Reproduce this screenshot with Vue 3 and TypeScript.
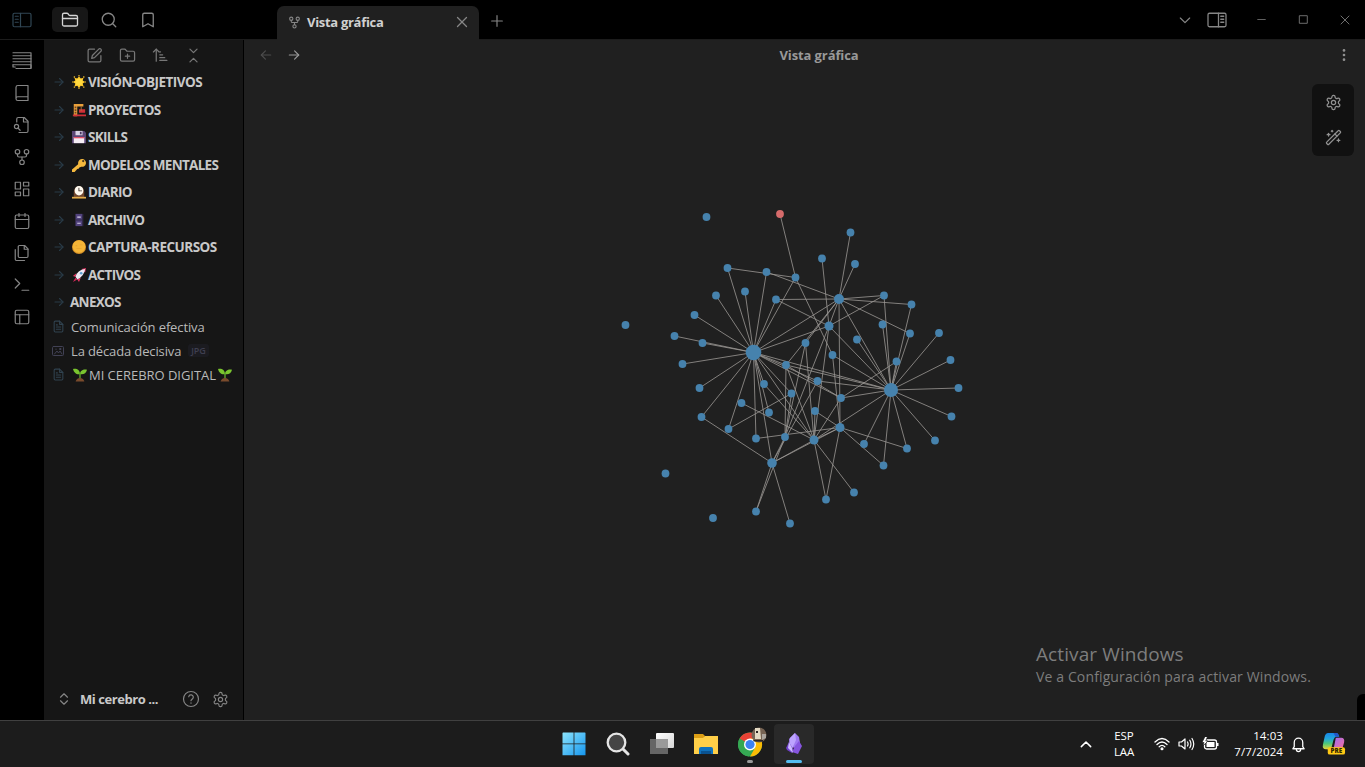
<script setup lang="ts">
import { h, type FunctionalComponent } from 'vue'

const icons: Record<string, string[]> = {
  folder: ['M20 20a2 2 0 0 0 2-2V8a2 2 0 0 0-2-2h-7.900a2 2 0 0 1-1.700-.9L9.600 4a2 2 0 0 0-1.700-1H4a2 2 0 0 0-2 2v13a2 2 0 0 0 2 2Z', 'M2 10h20'],
  search: ['M19 11a8 8 0 1 1-16 0a8 8 0 0 1 16 0Z', 'm21 21-4.300-4.300'],
  bookmark: ['m19 21-7-4-7 4V5a2 2 0 0 1 2-2h10a2 2 0 0 1 2 2v16z'],
  edit: ['M12 3H5a2 2 0 0 0-2 2v14a2 2 0 0 0 2 2h14a2 2 0 0 0 2-2v-7', 'M18.400 2.600a2.200 2.200 0 0 1 3 3L12 15l-4 1 1-4Z'],
  folderPlus: ['M20 20a2 2 0 0 0 2-2V8a2 2 0 0 0-2-2h-7.900a2 2 0 0 1-1.700-.9L9.600 4a2 2 0 0 0-1.700-1H4a2 2 0 0 0-2 2v13a2 2 0 0 0 2 2Z', 'M12 10v6', 'M9 13h6'],
  sort: ['m2 7 4-4 4 4', 'M6 3v17', 'M11 11h4', 'M11 15h7', 'M11 19h10', 'M11 7h1'],
  collapse: ['m7 21 5-5 5 5', 'm7 3 5 5 5-5'],
  book: ['M4 19.500V4.500A2.500 2.500 0 0 1 6.500 2H20v20H6.500a2.500 2.500 0 0 1 0-5H20'],
  fileSearch: ['M5 8V4a2 2 0 0 1 2-2h8l5 5v13a2 2 0 0 1-2 2H8', 'M14 2v6h6', 'M7.500 14a2.800 2.800 0 1 1-5.600 0a2.800 2.800 0 0 1 5.600 0Z', 'm9.500 19-3-3'],
  graph: ['M9 5a3 3 0 1 1-6 0a3 3 0 0 1 6 0Z', 'M21 5a3 3 0 1 1-6 0a3 3 0 0 1 6 0Z', 'M15 19a3 3 0 1 1-6 0a3 3 0 0 1 6 0Z', 'M6 8v2q0 2 2 2h8q2 0 2-2V8', 'M12 12v4'],
  dashboard: ['M3 3h7v9H3z', 'M14 3h7v5h-7z', 'M14 12h7v9h-7z', 'M3 16h7v5H3z'],
  calendar: ['M5 4h14a2 2 0 0 1 2 2v14a2 2 0 0 1-2 2H5a2 2 0 0 1-2-2V6a2 2 0 0 1 2-2Z', 'M8 2v4', 'M16 2v4', 'M3 10h18'],
  files: ['M15.500 2H8.600A1.600 1.600 0 0 0 7 3.600v12.800A1.600 1.600 0 0 0 8.600 18h9.800a1.600 1.600 0 0 0 1.600-1.600V6.500Z', 'M15 2v5h5', 'M3 7.600v12.800A1.600 1.600 0 0 0 4.600 22h10.800'],
  terminal: ['m3 16 6-6-6-6', 'M12 19h9'],
  layout: ['M5 3h14a2 2 0 0 1 2 2v14a2 2 0 0 1-2 2H5a2 2 0 0 1-2-2V5a2 2 0 0 1 2-2Z', 'M3 9h18', 'M9 21V9'],
  x: ['M18 6 6 18', 'm6 6 12 12'],
  plus: ['M12 4v16', 'M4 12h16'],
  left: ['M20 12H4', 'm11 5-7 7 7 7'],
  right: ['M4 12h16', 'm13 5 7 7-7 7'],
  down: ['m5 9 7 7 7-7'],
  up: ['m5 16 7-7 7 7'],
  minus: ['M5 12h14'],
  square: ['M5 5h14v14H5Z'],
  updown: ['m6 15 6 6 6-6', 'm6 9 6-6 6 6'],
  help: ['M22 12a10 10 0 1 1-20 0a10 10 0 0 1 20 0Z', 'M9 9a3 3 0 0 1 6 1c0 2-3 2.500-3 4.200', 'M12 17v.5'],
  dots: ['M12 4v.1', 'M12 12v.1', 'M12 20v.1'],
  gear: ['M12.220 2h-.44a2 2 0 0 0-2 2v.18a2 2 0 0 1-1 1.730l-.43.25a2 2 0 0 1-2 0l-.15-.08a2 2 0 0 0-2.730.73l-.22.38a2 2 0 0 0 .73 2.730l.15.1a2 2 0 0 1 1 1.720v.51a2 2 0 0 1-1 1.740l-.15.090a2 2 0 0 0-.73 2.730l.22.38a2 2 0 0 0 2.730.73l.15-.08a2 2 0 0 1 2 0l.43.25a2 2 0 0 1 1 1.730V20a2 2 0 0 0 2 2h.44a2 2 0 0 0 2-2v-.18a2 2 0 0 1 1-1.730l.43-.25a2 2 0 0 1 2 0l.15.080a2 2 0 0 0 2.730-.73l.22-.39a2 2 0 0 0-.73-2.730l-.15-.08a2 2 0 0 1-1-1.740v-.5a2 2 0 0 1 1-1.740l.15-.09a2 2 0 0 0 .73-2.730l-.22-.38a2 2 0 0 0-2.730-.73l-.15.080a2 2 0 0 1-2 0l-.43-.25a2 2 0 0 1-1-1.730V4a2 2 0 0 0-2-2z', 'M15 12a3 3 0 1 1-6 0a3 3 0 0 1 6 0Z'],
  wand: ['m21.600 3.600-1.200-1.200a1.200 1.200 0 0 0-1.800 0L2.400 18.600a1.200 1.200 0 0 0 0 1.800l1.200 1.200a1.200 1.200 0 0 0 1.800 0L21.600 5.400a1.200 1.200 0 0 0 0-1.800', 'm14 7 3 3', 'M5 6v4', 'M19 14v4', 'M10 2v2', 'M7 8H3', 'M21 16h-4', 'M11 3H9'],
  file: ['M14 2H6a2 2 0 0 0-2 2v16a2 2 0 0 0 2 2h12a2 2 0 0 0 2-2V8Z', 'M14 2v6h6', 'M8 9h2', 'M8 13h8', 'M8 17h8'],
  image: ['M3 3h18a2 2 0 0 1 2 2v14a2 2 0 0 1-2 2H3a2 2 0 0 1-2-2V5a2 2 0 0 1 2-2Z', 'm5 18 5-6 3 4 3-4 4 6', 'M8 8v1', 'M16 7h2v2h-2Z'],
  sideLeft: ['M2 3h20a2 2 0 0 1 2 2v14a2 2 0 0 1-2 2H2a2 2 0 0 1-2-2V5a2 2 0 0 1 2-2Z', 'M10 3v18', 'M3 7h4', 'M3 11h4', 'M3 15h4'],
  sideRight: ['M2 3h20a2 2 0 0 1 2 2v14a2 2 0 0 1-2 2H2a2 2 0 0 1-2-2V5a2 2 0 0 1 2-2Z', 'M14 3v18', 'M17 7h4', 'M17 11h4', 'M17 15h4'],
  lines: ['M0 1h24v20', 'M0 5h24', 'M0 9h24', 'M0 13h24', 'M0 17h24v5H4', 'M0 17v3h3'],
  bell: ['M4 18h16l-2-3V9a6 6 0 0 0-12 0v6Z', 'M9 19a3 3 0 0 0 6 0'],
}

const Icon: FunctionalComponent<{ name: string; size?: number; w?: number }> = (p) =>
  h('svg', {
    width: p.size ?? 18, height: p.size ?? 18, viewBox: '0 0 24 24', fill: 'none', stroke: 'currentColor',
    'stroke-width': p.w ?? 1.75, 'stroke-linecap': 'round', 'stroke-linejoin': 'round', overflow: 'visible',
  }, icons[p.name].map((d) => h('path', { d })))
Icon.props = ['name', 'size', 'w']

type Shape = [fill: string, d: string]
const emblems: Record<string, Shape[]> = {
  sun: [['#ffc928', 'M8 1.500 9.900 4 13.200 3 12.200 6.200 15 8 12.200 9.800 13.200 13 9.900 12.200 8 15 6.100 12.200 2.800 13 3.800 9.800 1 8 3.800 6.200 2.800 3 6.100 4Z'], ['#ffd940', 'M4 8a4 4 0 1 0 8 0a4 4 0 1 0-8 0'], ['#e8b52d', 'M7.300 0h1.400v1.500H7.300ZM7.300 14.500h1.400V16H7.300ZM0 7.300h1.500v1.400H0ZM14.500 7.300H16v1.400h-1.500ZM2 1.500h1.500V3H2ZM12.700 1.500h1.500V3h-1.500ZM2 13h1.500v1.500H2ZM12.700 13h1.500v1.500h-1.500Z']],
  crane: [['#e9a03b', 'M2 1h11v3H6v11H2Z'], ['#704426', 'M3 4h2v2H3ZM3 7h2v2H3ZM3 10h2v2H3Z'], ['#cf2f38', 'M8 7h7v4H8ZM1 13h15v2H1Z'], ['#b6763a', 'M10 4h1v5h-1Z']],
  disk: [['#5b4675', 'M0 1h14l2 2v12H0Z'], ['#d9d3e5', 'M4 1h8v5H4Z'], ['#46355e', 'M9 2h2v3H9Z'], ['#f5edf4', 'M2 8h12v7H2Z'], ['#e35268', 'M2 8h12v1.500H2Z']],
  key: [['#f4b83e', 'M7 5a4.500 4.500 0 1 1 3.500 5L8 11v1l-2 .5L3 16H0v-3L7 7Z'], ['#46351d', 'M11.500 3.500a1.300 1.300 0 1 0 2.600 0a1.300 1.300 0 1 0-2.600 0']],
  clock: [['#70472f', 'M2 14V8a6 7 0 0 1 12 0v6Z'], ['#fffaf0', 'M3 6.500a5 5.500 0 1 0 10 0a5 5.500 0 1 0-10 0'], ['#3e302c', 'M7.400 3h1v3.200h3v1h-4Z'], ['#e3ac4a', 'M0 13.500h16v2H0Z']],
  cabinet: [['#51427c', 'M4 1h8v14H4Z'], ['#302849', 'M4 7.500h8v1H4ZM12 1h1v14h-1Z'], ['#d6cde8', 'M6 4h4v1.300H6ZM6 11h4v1.300H6Z']],
  coin: [['#d69027', 'M0 8a8 8 0 1 0 16 0a8 8 0 1 0-16 0'], ['#f4b537', 'M.8 7.500a7.200 7.200 0 1 0 14.400 0a7.200 7.200 0 1 0-14.400 0'], ['#e6a431', 'M4 6h2v1H4ZM9 5h3v1H9ZM5 9h6v1H5Z']],
  rocket: [['#e83563', 'M5 6 1 9l3 1ZM10 11 8 16l-2-3ZM11 1l5-1-1 5Z'], ['#eee9f3', 'M4 10Q6 2 15 1Q14 9 6 13Z'], ['#5ca0d3', 'M9 6a1.500 1.500 0 1 0 3 0a1.500 1.500 0 1 0-3 0'], ['#d6285a', 'M4 11l2 2-5 3Z']],
  sprout: [['#7ac52f', 'M8 7C4 8 1 5 0 1C4 0 8 2 8 7ZM8 7C8 3 12 1 16 2C15 6 12 8 8 7Z'], ['#5fa12b', 'M7.200 5h1.600v8H7.200Z'], ['#7a4b2c', 'M3 15.500q1-4 5-4t5 4Z']],
}
const Emblem: FunctionalComponent<{ name: string; size?: number }> = (p) =>
  h('svg', { width: p.size ?? 14, height: p.size ?? 14, viewBox: '0 0 16 16' }, emblems[p.name].map(([fill, d]) => h('path', { fill, d })))
Emblem.props = ['name', 'size']

const ribbon = ['lines', 'book', 'fileSearch', 'graph', 'dashboard', 'calendar', 'files', 'terminal', 'layout']
const folders = [
  { icon: 'sun', name: 'VISIÓN-OBJETIVOS', wide: true },
  { icon: 'crane', name: 'PROYECTOS' },
  { icon: 'disk', name: 'SKILLS' },
  { icon: 'key', name: 'MODELOS MENTALES' },
  { icon: 'clock', name: 'DIARIO' },
  { icon: 'cabinet', name: 'ARCHIVO' },
  { icon: 'coin', name: 'CAPTURA-RECURSOS', wide: true },
  { icon: 'rocket', name: 'ACTIVOS' },
  { icon: '', name: 'ANEXOS' },
]

const nodes: Record<string, [number, number, number?]> = {
  a: [706.5, 217], b: [780, 214], c: [850.5, 232.5], d: [822, 258.5], e: [855, 264], f: [727.5, 268], g: [766.5, 272],
  h: [795.5, 277.5], i: [716, 295.5], j: [745, 291.5], k: [776, 299.5], l: [839, 299, 5], m: [884, 295.5], n: [911.5, 304.5],
  o: [694.5, 315], p: [625.5, 325], q: [829, 326, 4.500], r: [882.5, 324.5], s: [910, 333.5], t: [939, 333], u: [674.5, 336],
  v: [702.5, 343], w: [857, 339.5], x: [805.5, 343], H: [753.5, 352.5, 7.800], y: [832.5, 355], z: [682.5, 364], A: [786, 365],
  B: [896.5, 361.5], C: [950.5, 360], D: [699.5, 388], E: [764, 384], F: [817.5, 381], G: [791.5, 393.5], R: [891, 390, 7],
  I: [958.5, 388], J: [741.5, 403], K: [769, 412.5], L: [815, 411], M: [841, 398], N: [951.5, 416.5], O: [701.5, 417],
  P: [728.5, 429], Q: [756, 438.5], S: [785, 437], T: [814, 440, 4.500], U: [840, 427.5, 4.500], V: [864, 444], W: [907, 448.5],
  X: [935, 440.5], Y: [883.5, 465.5], Z: [772, 463, 4.800], '1': [826, 499.5], '2': [854, 492.5], '3': [756, 511.5],
  '4': [790, 523.5], '5': [665.5, 473.5], '6': [713, 518],
}
const links: Record<string, string> = {
  H: 'fgijkhouvzDOPQElqAGFMZTRK',
  R: 'lmnrstCBINXVYwyqAFMT',
  l: 'gkcemnsUqxA',
  q: 'dmkTS',
  h: 'bfy',
  T: 'JAExZMUL12',
  U: 'yLYWQZ1',
  Z: 'OFS34',
  M: 'BA',
  S: 'AxG3',
  P: 'G',
  W: 'R',
}
const edges = Object.entries(links).flatMap(([from, to]) => [...to].map((t) => ({ key: from + t, s: nodes[from], e: nodes[t] })))
</script>

<template>
  <div class="screen">
    <header class="titlebar">
      <div class="top-left">
        <span class="cell toggle"><Icon name="sideLeft" :size="18" :w="1.6" /></span>
        <span class="cell active"><Icon name="folder" /></span>
        <span class="cell"><Icon name="search" /></span>
        <span class="cell"><Icon name="bookmark" /></span>
      </div>
      <div class="tab">
        <Icon name="graph" :size="13" :w="2" />
        <b>Vista gráfica</b>
        <Icon name="x" :size="18" />
      </div>
      <div class="newtab"><Icon name="plus" :size="16" /></div>
      <div class="window-tools">
        <span class="cell sm"><Icon name="down" :size="16" /></span>
        <span class="cell mid"><Icon name="sideRight" :size="18" :w="1.7" /></span>
        <span class="cell win"><Icon name="minus" :size="13" :w="1.5" /></span>
        <span class="cell win"><Icon name="square" :size="13" :w="1.7" /></span>
        <span class="cell win"><Icon name="x" :size="16" :w="1.4" /></span>
      </div>
    </header>

    <div class="workspace">
      <nav class="ribbon">
        <span v-for="r in ribbon" :key="r"><Icon :name="r" :size="18" :w="1.6" /></span>
      </nav>
      <aside class="sidebar">
        <div class="tools">
          <Icon name="edit" :size="17" /><Icon name="folderPlus" :size="17" /><Icon name="sort" :size="17" /><Icon name="collapse" :size="17" />
        </div>
        <ul class="tree">
          <li v-for="f in folders" :key="f.name" class="folder">
            <Icon class="arrow" name="right" :size="12" :w="2.2" />
            <Emblem v-if="f.icon" :name="f.icon" />
            <span :class="['name', { plain: !f.icon, wide: f.wide }]">{{ f.name }}</span>
          </li>
          <li class="doc"><Icon name="file" :size="13" :w="2" /><span>Comunicación efectiva</span></li>
          <li class="doc img"><Icon name="image" :size="12" :w="2" /><span>La década decisiva</span><em>JPG</em></li>
          <li class="doc digital"><Icon name="file" :size="13" :w="2" /><Emblem name="sprout" /><span>MI CEREBRO DIGITAL</span><Emblem name="sprout" /></li>
        </ul>
        <div class="vault">
          <Icon name="updown" :size="14" :w="2" />
          <b>Mi cerebro ...</b>
          <Icon name="help" :size="18" :w="1.6" />
          <Icon name="gear" :size="17" :w="1.6" />
        </div>
      </aside>
      <main class="view">
        <div class="view-head">
          <div class="nav"><Icon class="dim" name="left" :size="14" :w="2" /><Icon name="right" :size="14" :w="2" /></div>
          <b>Vista gráfica</b>
          <Icon class="more" name="dots" :size="14" :w="4.5" />
        </div>
        <svg class="graph" viewBox="244 72 1121 648" width="1121" height="648">
          <line v-for="l in edges" :key="l.key" :x1="l.s[0]" :y1="l.s[1]" :x2="l.e[0]" :y2="l.e[1]" />
          <circle v-for="(n, id) in nodes" :key="id" :class="{ missing: id === 'b' }" :cx="n[0]" :cy="n[1]" :r="n[2] ?? 3.9" />
        </svg>
        <div class="controls"><Icon name="gear" :size="17" /><Icon name="wand" :size="17" /></div>
        <div class="watermark"><p>Activar Windows</p><small>Ve a Configuración para activar Windows.</small></div>
        <i class="corner"></i>
      </main>
    </div>

    <footer class="taskbar">
      <div class="apps">
        <span class="app">
          <svg width="24" height="24" viewBox="0 0 24 24"><defs><linearGradient id="win" x2="1" y2="1"><stop stop-color="#8ce4fc" /><stop offset="1" stop-color="#1596ef" /></linearGradient></defs><path fill="url(#win)" d="M1 .5h10.600v11H.5V1ZM12.400.5H23l.5.5v10.500H12.400ZM.5 12.300h11.100v11H.5ZM12.400 12.300h11.100v11H12.400Z" /></svg>
        </span>
        <span class="app">
          <svg width="24" height="24" viewBox="0 0 24 24" fill="#454545" stroke="#e5e5e5" stroke-width="2.300"><path d="m17 17 5 5" stroke-width="3" stroke-linecap="round" /><circle cx="10.500" cy="10.500" r="8.800" /></svg>
        </span>
        <span class="app">
          <svg width="26" height="24" viewBox="0 0 26 24"><defs><linearGradient id="pane" x2="1" y2="1"><stop stop-color="#fff" /><stop offset="1" stop-color="#d6d6d6" /></linearGradient></defs><rect x="7" y="1" width="18" height="15" rx="1" fill="url(#pane)" /><path fill="#666" d="M1 7h18v15H1Z" /><path fill="#9a9a9a" d="M7 7h12v9H7Z" /></svg>
        </span>
        <span class="app">
          <svg width="26" height="24" viewBox="0 0 26 24"><path fill="#dc9e15" d="M1 2h9l2 2-2 4H1Z" /><path fill="#ffcf48" d="M1 6h9l2-2h13v18H1Z" /><path fill="#0f72bd" d="M6 22v-5q0-2 2-2h10q2 0 2 2v5Z" /><path fill="#0a5290" d="M8 19h10v3H8Z" /></svg>
        </span>
        <span class="app chrome">
          <svg width="32" height="34" viewBox="0 0 32 34">
            <circle cx="14" cy="17.500" r="12" fill="#35a853" /><path fill="#e94235" d="M14 17.500 3.600 11.500A12 12 0 0 1 24.400 11.500Z" /><path fill="#fbbc05" d="M14 11.500h10.400A12 12 0 0 1 14 29.500l5.200-9Z" /><path fill="#35a853" d="M3.600 11.500 8.800 20.500 14 23.500l-1 6A12 12 0 0 1 3.600 11.500" />
            <circle cx="14" cy="17.500" r="6" fill="#fff" /><circle cx="14" cy="17.500" r="4.600" fill="#3c82f3" />
            <circle cx="23" cy="8" r="7.500" fill="#766353" /><path fill="#e3d9c2" d="M19 1h5l1 11h-6Z" /><path fill="#2a2522" d="M20 4h2v2h-2ZM17 13h10v1.500H18Z" /><path fill="#aaa49d" d="M26 7h4v4l-4 2Z" />
          </svg><i class="dot"></i>
        </span>
        <span class="app current">
          <svg width="18" height="24" viewBox="0 0 18 24"><path fill="#9f7af1" d="m10 1 4 4 1 6-4 5-6-1-1-8Z" /><path fill="#bda4ff" d="m10 1 1 7-4 9-3-3 1-8Z" /><path fill="#7141ce" d="m4 10 4 7-1 4-5-3-1-2Z" /><path fill="#8655df" d="m14 9 3 5-4 8-6-2 3-6Z" /><path fill="#cdbaff" d="m4 10 3 6 1 5-5-5Z" /></svg><i class="dash"></i>
        </span>
      </div>
      <div class="tray">
        <Icon class="chev" name="up" :size="16" :w="2.3" />
        <div class="lang"><span>ESP</span><span>LAA</span></div>
        <svg class="wifi" width="16" height="14" viewBox="0 0 16 14" fill="none" stroke="#fff" stroke-width="1.300" stroke-linecap="round"><path d="M1 5q7-7 14 0M3 7.500q5-5 10 0M5.200 9.800q2.800-2.800 5.600 0" /><circle cx="8" cy="11.800" r=".9" fill="#fff" /></svg>
        <svg class="vol" width="17" height="14" viewBox="0 0 17 14" fill="none" stroke="#fff" stroke-width="1.200" stroke-linecap="round" stroke-linejoin="round"><path d="M1 5h2.500L7 2v10L3.500 9H1ZM9.500 5q1.200 2 0 4M11.800 3.200q2.300 3.800 0 7.600M14 1.500q3.500 5.500 0 11" /></svg>
        <svg class="bat" width="17" height="14" viewBox="0 0 17 14"><rect x="2.500" y="3" width="12" height="9" rx="2" fill="none" stroke="#fff" stroke-width="1.300" /><path fill="#fff" d="M4.500 5h8v5h-8ZM15 6h1.500v3H15Z" /><path fill="#fff" stroke="#1c1c1c" stroke-width=".7" d="M3-.5 0 5.500h2L1 9l5-5H3.800L5.500-.5Z" /></svg>
        <div class="clock"><span>14:03</span><span>7/7/2024</span></div>
        <Icon class="bell" name="bell" :size="17" :w="1.8" />
        <svg class="copilot" width="24" height="24" viewBox="0 0 25 25"><defs><linearGradient id="ca" x2="0" y2="1"><stop stop-color="#1787e8" /><stop offset=".35" stop-color="#22a5dc" /><stop offset=".65" stop-color="#4ec879" /><stop offset="1" stop-color="#e7d336" /></linearGradient><linearGradient id="cb" x2="1" y2="1"><stop stop-color="#9e6cf0" /><stop offset="1" stop-color="#f76e9a" /></linearGradient></defs><path fill="url(#ca)" d="M6 1h9q2 0 3 4h-3q-2 0-3 3l-2 8q-1 2-3 2H4q-4 0-3-5L3 4q1-3 3-3" /><path fill="#2356c8" d="M12 1h3q2 0 3 4h-4Z" /><path fill="url(#cb)" d="M15 6h5q4 0 3 5l-2 7h-9l2-10q0-2 1-2" /><rect x="6" y="16" width="18" height="7.500" rx="2" fill="#ffc914" /><text x="15" y="22.300" text-anchor="middle">PRE</text></svg>
      </div>
    </footer>
  </div>
</template>

<style>
html, body { margin: 0; background: #000; overflow: hidden; }
</style>
<style scoped>
* { box-sizing: border-box; }
svg { flex: none; display: block; }
.screen { width: 1365px; height: 767px; display: flex; flex-direction: column; overflow: hidden; background: #000; color: #b8b8b8; font: 13px "Open Sans", "Noto Sans", sans-serif; white-space: nowrap; }
.titlebar { height: 40px; flex: none; display: flex; border-bottom: 1px solid #1c1c1c; color: #868686; }
.top-left { width: 277px; display: flex; align-items: center; }
.cell { display: flex; align-items: center; justify-content: center; width: 39px; height: 25px; border-radius: 5px; }
.toggle { width: 44px; margin-right: 8px; color: #304654; }
.active { width: 36px; margin-right: 1px; background: #171717; color: #d4d4d4; }
.tab { width: 202px; height: 34px; margin-top: 6px; padding: 0 8px 2px 11px; display: flex; align-items: center; background: #202020; border-radius: 7px 7px 0 0; }
.tab b { flex: 1; margin-left: 6px; color: #d0d0d0; letter-spacing: -.3px; }
.newtab { padding: 13px 10px; }
.window-tools { margin-left: auto; display: flex; align-items: center; }
.sm { width: 32px; }
.mid { width: 32px; margin-right: 7px; }
.win { width: 42px; color: #777; }
.win:last-child { width: 41px; }
.workspace { height: 680px; flex: none; display: flex; }
.ribbon { width: 44px; padding-top: 5px; color: #858585; }
.ribbon span { height: 32px; display: flex; align-items: center; justify-content: center; }
.sidebar { width: 200px; display: flex; flex-direction: column; background: #161616; border-right: 1px solid #000; }
.tools { height: 28.5px; padding: 7px 0 0 42px; display: flex; gap: 16px; color: #777; }
.tree { list-style: none; margin: 0; padding: 0; flex: 1; }
.folder { height: 27.5px; display: flex; align-items: center; padding-left: 9px; color: #c8c8c8; font-size: 13.5px; font-weight: 700; }
.folder:nth-child(9) { height: 26px; }
.arrow { margin-right: 7px; color: #293b47; }
.name { margin-left: 2px; letter-spacing: -.7px; }
.wide { letter-spacing: -.5px; }
.plain { margin-left: -2px; }
.doc { height: 24px; display: flex; align-items: center; padding-left: 8px; color: #b9b9b9; letter-spacing: -.13px; }
.doc > svg:first-child { color: #30424f; margin-right: 6px; }
.img > svg:first-child { color: #414154; margin-right: 7px; }
.digital > svg:first-child { margin-right: 8px; }
.digital span { margin: 0 2px; letter-spacing: -.03px; }
.doc em { margin-left: 7px; padding: 0 3px; border-radius: 3px; background: #1b1b20; color: #3f3f50; font: 600 9px/13px "Open Sans", sans-serif; }
.vault { height: 42px; display: flex; align-items: center; padding-left: 13px; color: #858585; }
.vault b { width: 94px; margin-left: 9px; margin-right: 8px; color: #c9c9c9; letter-spacing: -.45px; }
.vault svg:last-child { margin-left: 12px; }
.view { width: 1121px; position: relative; background: #202020; }
.view-head { height: 32px; padding: 0 14px 2px 15px; display: flex; align-items: center; color: #999; }
.view-head b { flex: 1; text-align: center; letter-spacing: -.1px; }
.nav { display: flex; gap: 14px; }
.dim { color: #4c4c4c; }
.more { color: #909090; }
.graph line { stroke: #9b9794; stroke-width: .9; opacity: .9; }
.graph circle { fill: #4682ad; }
.graph circle.missing { fill: #d66b6b; }
.controls { position: absolute; right: 11px; top: 44px; width: 42px; height: 72px; display: flex; flex-direction: column; align-items: center; justify-content: space-between; padding: 10px 0; border-radius: 6px; background: #111; color: #929292; }
.watermark { position: absolute; left: 792px; top: 601px; color: #7d7d7d; }
.watermark p { margin: 0; font-size: 19px; line-height: 26px; letter-spacing: .1px; }
.watermark small { display: block; font-size: 14px; line-height: 19px; letter-spacing: .13px; }
.corner { position: absolute; right: 0; bottom: 0; width: 8px; height: 26px; background: #000; border-radius: 6px 0 0 0; }
.taskbar { height: 47px; flex: none; display: flex; justify-content: space-between; background: #1c1c1c; border-top: 1px solid #404040; color: #fff; }
.apps { display: flex; padding-left: 554px; gap: 4px; }
.app { position: relative; width: 40px; height: 40px; margin-top: 3px; display: flex; align-items: center; justify-content: center; border-radius: 4px; }
.chrome svg { margin-left: 4px; }
.current { background: #292929; }
.dot, .dash { position: absolute; bottom: 1px; width: 6px; height: 3px; border-radius: 2px; background: #999; }
.dash { width: 16px; background: #55bdf1; }
.tray { display: flex; align-items: center; width: 287px; font-size: 11.5px; }
.lang, .clock { display: flex; flex-direction: column; line-height: 16px; }
.lang { width: 24px; margin-left: 18px; align-items: center; letter-spacing: -.1px; }
.wifi { margin-left: 18px; }
.vol { margin-left: 8px; }
.bat { margin-left: 7px; }
.clock { align-items: flex-end; width: 64px; letter-spacing: .1px; }
.bell { margin-left: 7px; }
.copilot { margin-left: 15px; }
.copilot text { font: 800 6.5px "Open Sans", sans-serif; fill: #302600; }
</style>
